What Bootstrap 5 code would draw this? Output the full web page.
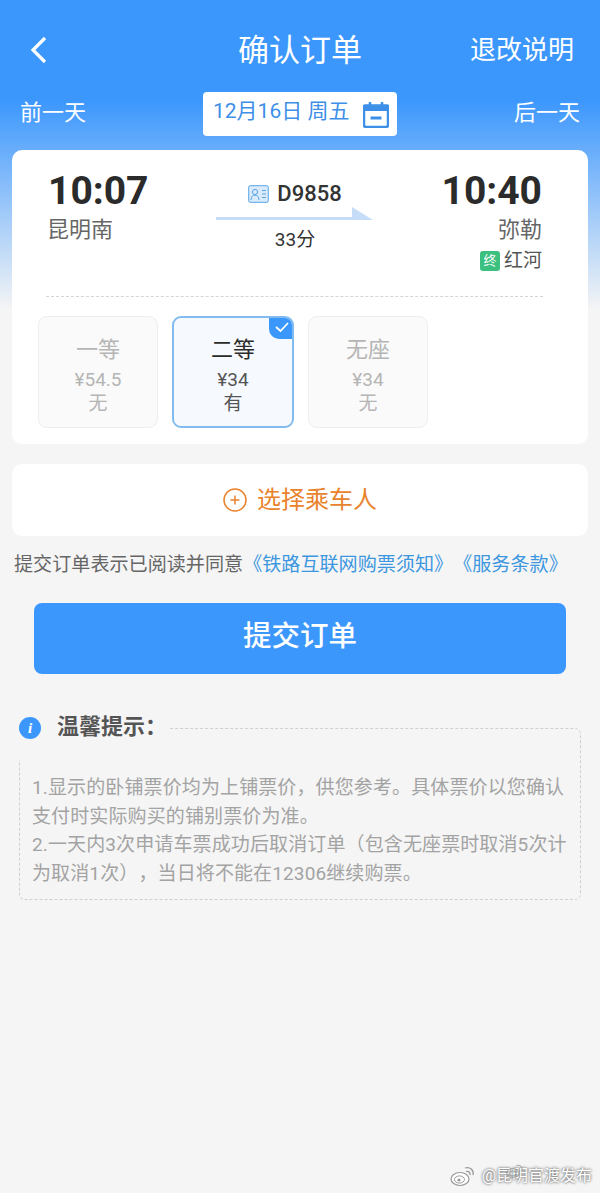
<!DOCTYPE html>
<html lang="zh">
<head>
  <meta charset="UTF-8" />
  <meta name="viewport" content="width=device-width, initial-scale=1" />
  <title>确认订单</title>
  <link href="https://cdn.jsdelivr.net/npm/bootstrap@5.3.0/dist/css/bootstrap.min.css" rel="stylesheet" />
  <style>
    body {
      width: 600px;
      height: 1193px;
      overflow: hidden;
      position: relative;
      font-family: Roboto, "Noto Sans CJK SC", sans-serif;
      text-spacing-trim: space-all;
      background: linear-gradient(180deg, #3c97fd 0, #3c97fd 100px, #f5f5f5 310px, #f5f5f5 100%);
    }
    .top-bar { height: 92px; padding: 8px 26px 0 26px; color: #fff; }
    .top-side { flex: 1 1 0; }
    .back-icon { margin-left: 2px; display: block; }
    .top-title { font-size: 31px; line-height: 1; }
    .top-link { font-size: 26px; line-height: 1; }
    .date-bar { height: 44px; padding: 0 20px; margin-bottom: 14px; color: #fff; font-size: 22px; }
    .date-bar > span { padding-bottom: 4px; }
    .date-box { width: 194px; height: 44px; border-radius: 4px; background: #fff; color: #3d8fe8; font-size: 21px; padding-left: 10px; }
    .date-box span { padding-bottom: 5px; }
    .date-box svg { margin-left: 6px; }
    .panel-white { background: #fff; border-radius: 10px; margin: 0 12px; }
    .train-panel { height: 294px; }
    .train-row { height: 146px; padding: 19px 46px 0 36px; }
    .train-left { width: 130px; }
    .train-right { width: 130px; }
    .time-text { font-size: 39px; font-weight: 700; line-height: 44px; color: #2b2b2b; }
    .station-text { font-size: 22px; line-height: 30px; color: #666; margin-top: 2px; }
    .train-left .station-text { margin-left: -1px; }
    .train-no { font-size: 22px; font-weight: 500; color: #333; line-height: 24px; padding-top: 13px; }
    .train-arrow { display: block; margin: 0 auto; }
    .duration-text { font-size: 19px; color: #333; line-height: 24px; margin-top: 7px; }
    .end-tag { width: 20px; height: 20px; border-radius: 3px; background: #3bc07f; color: #fff; font-size: 13px; line-height: 20px; text-align: center; }
    .city-text { font-size: 19px; line-height: 24px; color: #555; }
    .end-row { margin-top: 4px; }
    .dash-line { border-top: 1px dashed #d5d5d5; margin: 0 45px 0 34px; }
    .seat-row { padding: 19px 26px 0 26px; gap: 14px; }
    .seat-box { position: relative; width: 120px; height: 112px; border: 1.5px solid #eee; border-radius: 9px; background: #fafafa; color: #b5b5b5; text-align: center; padding-top: 15px; overflow: hidden; }
    .seat-on { width: 122px; border: 2px solid #82bbef; background: #f6faff; color: #555; padding-top: 14px; }
    .seat-on .seat-name { color: #2b2b2b; }
    .seat-name { font-size: 22px; line-height: 36px; }
    .seat-line { font-size: 19px; line-height: 24px; }
    .seat-corner { right: -2px; top: -2px; width: 25px; height: 23px; background: #3c97fd; border-bottom-left-radius: 10px; }
    .seat-corner svg { display: block; margin: 4px 0 0 5px; }
    .passenger-panel { height: 72px; margin-top: 20px; color: #e9832d; font-size: 24px; gap: 10px; }
    .agree-text { font-size: 19.1px; color: #666; margin: 15px 0 0 14px; line-height: 28px; white-space: nowrap; }
    .agree-text span { color: #3c97e0; }
    .submit-btn { display: block; width: 532px; height: 71px; margin: 24px 0 0 34px; background: #3c97fd; border: 0; border-radius: 8px; color: #fff; font-size: 28.5px; font-weight: 500; padding: 0 0 2px; }
    .tip-wrap { position: relative; margin: 54px 19px 0 19px; height: 172px; }
    .tip-head { left: -19px; top: -16px; width: 168px; height: 48px; background: #f5f5f5; padding-left: 19px; }
    .tip-icon { flex: none; width: 22px; height: 22px; margin-top: 5px; border-radius: 50%; background: #3c97fd; color: #fff; font: italic 700 15px/22px "Liberation Serif", serif; text-align: center; }
    .tip-title { font-size: 22px; font-weight: 700; color: #555; margin: 1px 0 0 16px; white-space: nowrap; line-height: 28px; }
    .tip-box { height: 172px; border: 1px dashed #cfcfcf; border-radius: 6px; padding: 45px 10px 0 12px; font-size: 19px; line-height: 28.5px; color: #a3a3a3; letter-spacing: .12px; }
    .watermark { right: 8px; bottom: 6px; font-size: 16px; color: #fff; text-shadow: 0 0 3px #666, 0 0 2px #888; line-height: 20px; gap: 6px; }
    .water-swirl { left: 56px; top: -2px; opacity: .8; }
  </style>
</head>
<body>

  <div class="top-bar d-flex align-items-center">
    <div class="top-side">
      <svg class="back-icon" width="20" height="30" viewBox="0 0 20 30"><path d="M17 3 L5 15 L17 27" fill="none" stroke="#fff" stroke-width="3.200"/></svg>
    </div>
    <div class="top-title">确认订单</div>
    <div class="top-side top-link text-end">退改说明</div>
  </div>

  <div class="date-bar d-flex justify-content-between align-items-center">
    <span>前一天</span>
    <div class="date-box d-flex align-items-center gap-2">
      <span>12月16日 周五</span>
      <svg width="26" height="27" viewBox="0 0 26 27"><path d="M2 4.500h22a1 1 0 0 1 1 1V24a2 2 0 0 1-2 2H3a2 2 0 0 1-2-2V5.500a1 1 0 0 1 1-1z" fill="none" stroke="#3d8fe8" stroke-width="2.500"/><path d="M1 4h24v6H1z" fill="#3d8fe8"/><path d="M7 1v4M19 1v4" stroke="#3d8fe8" stroke-width="2.500"/><path d="M7.500 17h11" stroke="#3d8fe8" stroke-width="3"/></svg>
    </div>
    <span>后一天</span>
  </div>

  <div class="panel-white train-panel">
    <div class="train-row d-flex justify-content-between">
      <div class="train-left">
        <div class="time-text">10:07</div>
        <div class="station-text">昆明南</div>
      </div>
      <div class="text-center">
        <div class="train-no d-flex align-items-center justify-content-center gap-2">
          <svg width="21" height="18" viewBox="0 0 21 18"><rect x=".7" y=".7" width="19.600" height="16.600" rx="1.500" fill="#d8eafb" stroke="#5aa5e6"/><circle cx="7" cy="7" r="2.600" fill="none" stroke="#5aa5e6"/><path d="M3 15c0-6.500 8-6.500 8 0M14 5.500h4M14 9h4M14 12.500h4" fill="none" stroke="#5aa5e6"/></svg>
          D9858
        </div>
        <svg class="train-arrow" width="160" height="15" viewBox="0 0 160 15"><path d="M1 11h136L137 1l21 13H1z" fill="#c5ddf8"/></svg>
        <div class="duration-text">33分</div>
      </div>
      <div class="train-right text-end">
        <div class="time-text">10:40</div>
        <div class="station-text">弥勒</div>
        <div class="end-row d-flex align-items-center justify-content-end gap-1">
          <span class="end-tag">终</span><span class="city-text">红河</span>
        </div>
      </div>
    </div>
    <div class="dash-line"></div>
    <div class="seat-row d-flex">
      <div class="seat-box">
        <div class="seat-name">一等</div>
        <div class="seat-line">¥54.5</div>
        <div class="seat-line">无</div>
      </div>
      <div class="seat-box seat-on">
        <div class="seat-name">二等</div>
        <div class="seat-line">¥34</div>
        <div class="seat-line">有</div>
        <span class="seat-corner position-absolute">
          <svg width="16" height="14" viewBox="0 0 16 14"><path d="M2 7l4.500 4L14 3" fill="none" stroke="#fff" stroke-width="1.800"/></svg>
        </span>
      </div>
      <div class="seat-box">
        <div class="seat-name">无座</div>
        <div class="seat-line">¥34</div>
        <div class="seat-line">无</div>
      </div>
    </div>
  </div>

  <div class="panel-white passenger-panel d-flex align-items-center justify-content-center">
    <svg width="24" height="24" viewBox="0 0 24 24"><circle cx="12" cy="12" r="11" fill="none" stroke="#e9832d" stroke-width="1.500"/><path d="M7.500 12h9M12 7.500v9" stroke="#e9832d" stroke-width="1.500"/></svg>
    选择乘车人
  </div>

  <div class="agree-text">提交订单表示已阅读并同意<span>《铁路互联网购票须知》《服务条款》</span></div>

  <button class="submit-btn btn" type="button">提交订单</button>

  <div class="tip-wrap">
    <div class="tip-box">1.显示的卧铺票价均为上铺票价，供您参考。具体票价以您确认支付时实际购买的铺别票价为准。<br>2.一天内3次申请车票成功后取消订单（包含无座票时取消5次计为取消1次），当日将不能在12306继续购票。</div>
    <div class="tip-head position-absolute d-flex align-items-start">
      <span class="tip-icon">i</span>
      <span class="tip-title">温馨提示：</span>
    </div>
  </div>

  <div class="watermark position-absolute d-flex align-items-center">
    <svg width="26" height="22" viewBox="0 0 26 22"><ellipse cx="10" cy="14" rx="9" ry="6.500" fill="#fff" stroke="#999" stroke-width="1.200"/><ellipse cx="9.500" cy="14.500" rx="5" ry="3.600" fill="none" stroke="#999"/><circle cx="9" cy="15" r="1.600" fill="#999"/><path d="M15 3c5-1.500 9 2 8 7M16 6.500c2.500-.8 4.500 1 4 3.500" fill="none" stroke="#999" stroke-width="1.300"/></svg>
    <span>@昆明官渡发布</span>
    <svg class="water-swirl position-absolute" width="18" height="16" viewBox="0 0 26 22"><ellipse cx="10" cy="14" rx="9" ry="6.500" fill="none" stroke="#999" stroke-width="1.500"/><ellipse cx="9.500" cy="14.500" rx="5" ry="3.600" fill="none" stroke="#999" stroke-width="1.500"/><path d="M15 3c5-1.500 9 2 8 7" fill="none" stroke="#999" stroke-width="1.500"/></svg>
  </div>

</body>
</html>
